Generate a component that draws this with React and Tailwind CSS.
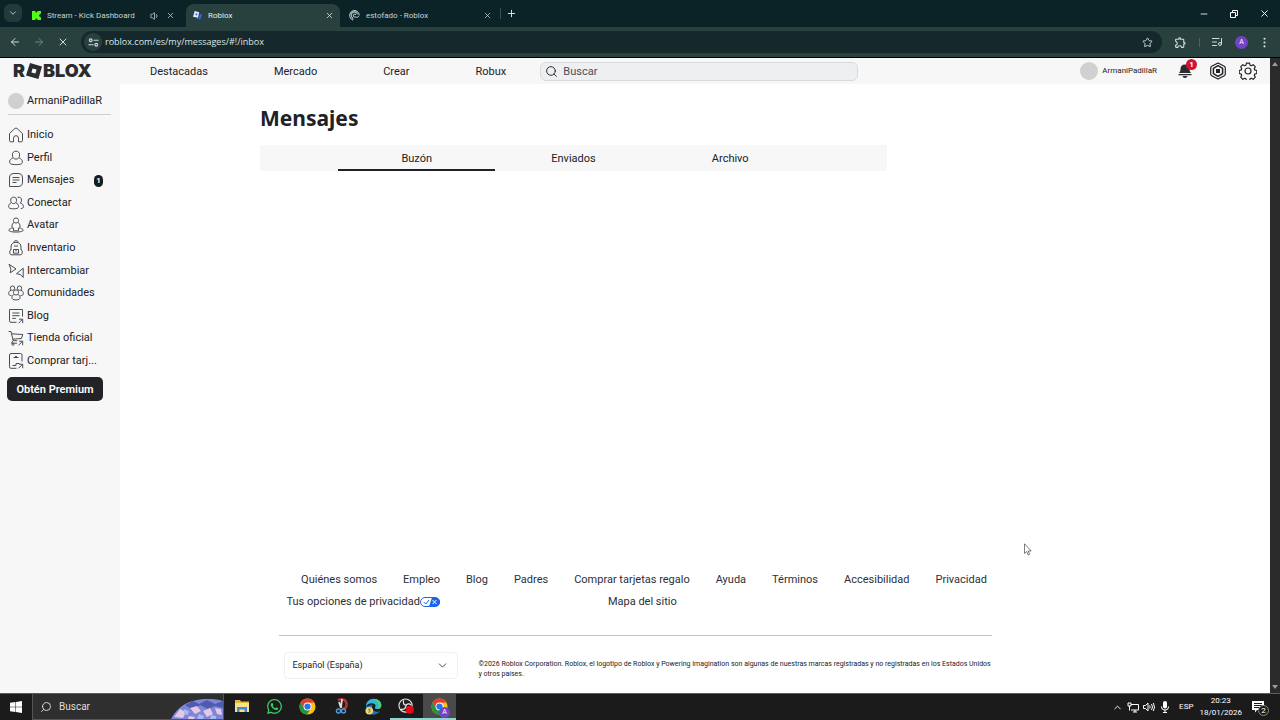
import React from 'react';
import {
    ArrowLeft, ArrowRight, X, ChevronDown, ChevronUp, Plus, Star, Minus,
    EllipsisVertical, Volume1, Search, ListMusic,
} from 'lucide-react';
import { FaWhatsapp } from 'react-icons/fa';
import { MdOutlineExtension } from 'react-icons/md';

const sideItems = [
    { label: 'Inicio', icon: 'home' },
    { label: 'Perfil', icon: 'profile' },
    { label: 'Mensajes', icon: 'messages', badge: 1 },
    { label: 'Conectar', icon: 'friends' },
    { label: 'Avatar', icon: 'avatar' },
    { label: 'Inventario', icon: 'inventory' },
    { label: 'Intercambiar', icon: 'trade' },
    { label: 'Comunidades', icon: 'groups' },
    { label: 'Blog', icon: 'blog' },
    { label: 'Tienda oficial', icon: 'shop' },
    { label: 'Comprar tarj...', icon: 'gift' },
];

const headerLinks = ['Destacadas', 'Mercado', 'Crear', 'Robux'];
const messageTabs = ['Buzón', 'Enviados', 'Archivo'];
const footerLinks = [
    'Quiénes somos', 'Empleo', 'Blog', 'Padres', 'Comprar tarjetas regalo',
    'Ayuda', 'Términos', 'Accesibilidad', 'Privacidad',
];

// Line icons of the side menu, all on a 16x16 grid
const sideIcons = {
    home: <path d="M1.500 6.500 6.800 1.600a1.700 1.700 0 0 1 2.400 0L14.500 6.500v7a1.300 1.300 0 0 1-1.300 1.300h-2.700v-3.600a2.500 2.500 0 0 0-5 0v3.600H2.800a1.300 1.300 0 0 1-1.300-1.300z" />,
    profile: (
        <>
            <path d="M8 1.200c2.400 0 3.600 1.300 3.600 3.700 0 2.600-1.200 4.200-3.600 4.200S4.400 7.500 4.400 4.900C4.400 2.500 5.600 1.200 8 1.200z" />
            <path d="M4.800 8C2.800 8.700 1.600 10.200 1.600 12c0 1.900 1.800 2.600 6.400 2.600s6.400-.7 6.400-2.600c0-1.800-1.200-3.300-3.200-4" />
        </>
    ),
    messages: (
        <>
            <path d="M1.500 14.500V6c0-3 1.500-4.500 4.500-4.500h4c3 0 4.500 1.500 4.500 4.500v4c0 3-1.500 4.500-4.500 4.500z" />
            <path d="M4.500 5.500h7M4.500 8h7M4.500 10.500h4" />
        </>
    ),
    friends: (
        <>
            <path d="M5.600 2.200c2 0 2.900 1 2.900 3s-1 3.400-2.900 3.400-2.900-1.400-2.900-3.400 1-3 2.900-3z" />
            <path d="M3.200 7.900C1.500 8.600.6 9.800.6 11.400c0 1.800 1.400 2.400 5 2.400s5-.6 5-2.400c0-1.600-.9-2.800-2.600-3.500" />
            <path d="M9.500 2.300c2.600-.6 4 .6 4 2.900 0 1.300-.4 2.300-1.200 2.900 2 .5 3.100 1.700 3.100 3.400 0 1.300-.8 2-2.600 2.200" />
        </>
    ),
    avatar: (
        <>
            <path d="M8 1c1.600 0 2.500.9 2.500 2.500S9.600 6 8 6 5.500 5.100 5.500 3.500 6.400 1 8 1z" />
            <path d="M6 5.600C4.500 6.300 4 7.500 4 9v2h1.500v2.800h5V11H12V9c0-1.500-.5-2.700-2-3.400" />
            <path d="M3.500 11.500c-1.700.3-2.800.9-2.800 1.600 0 1.100 3 2 7.300 2s7.300-.9 7.300-2c0-.7-1.100-1.300-2.800-1.600" />
        </>
    ),
    inventory: (
        <>
            <path d="M3 14.800c-1-.6-1.300-1.500-1.300-3 0-1 .4-1.600 1.300-1.800V7c0-3 1.800-4.700 5-4.700S13 4 13 7v3c.9.200 1.300.8 1.300 1.800 0 1.500-.3 2.400-1.300 3z" />
            <path d="M6 2.300C6 1.200 6.600.7 8 .7s2 .5 2 1.600M6 6h4M5.500 9.500h5v3.700h-5zM8 9.500v2" />
        </>
    ),
    trade: <path d="M1 1.300 8 5.900 2.200 9.900 2.900 6.200zM15.200 5.200v9.300L12.600 11.600 8.500 10.700z" />,
    groups: (
        <>
            <circle cx="4.500" cy="3.200" r="2.200" />
            <circle cx="11.500" cy="3.200" r="2.200" />
            <path d="M8 5c1.700 0 2.500.9 2.500 2.400S9.700 10 8 10s-2.500-1.100-2.500-2.600S6.300 5 8 5z" />
            <path d="M6 9.500c-1.400.6-2 1.600-2 2.900 0 1.900 1.200 2.500 4 2.500s4-.6 4-2.500c0-1.300-.6-2.300-2-2.900" />
            <path d="M3 5.300C1.400 6 .6 7 .6 8.500c0 1.300.8 2 2.900 2.100M13 5.300c1.600.7 2.400 1.700 2.400 3.200 0 1.300-.8 2-2.900 2.100" />
        </>
    ),
    blog: (
        <>
            <path d="M8.500 14.300H3a1.500 1.500 0 0 1-1.500-1.500V1.500h13V8.500" />
            <path d="M4.300 5h7.200M4.300 7.700h7.200M4.300 10.400h3.500M10.500 15.300l4-4M11 11.200h3.700v4" />
        </>
    ),
    shop: (
        <>
            <path d="M.6 1.500H3l2.200 9.200h4M3.600 3.800l11.200.7-1.400 4-8.600.7M5 10.700l-1.500 2.500H9" />
            <circle cx="5" cy="14.300" r="1" />
            <path d="M10.500 15.300l4-4M11 11.200h3.700v4" />
        </>
    ),
    gift: (
        <>
            <path d="M8.500 15.300H3a1.500 1.500 0 0 1-1.500-1.500V2A1.500 1.500 0 0 1 3 .5h9.500A1.500 1.500 0 0 1 14 2v6.500" />
            <path d="M5.500 4.500h5M8 3l-1.300 1.500M8 3l1.300 1.500M4.500 12.500h3.500v-2h3.500M10.500 15.300l4-4M11 11.200h3.700v4" />
        </>
    ),
};

const SideIcon = ({ name }) => (
    <svg viewBox="0 0 16 16" className="w-4 h-4 shrink-0" fill="none" stroke="#4b4c50" strokeWidth="1" strokeLinejoin="round" aria-hidden="true">
        {sideIcons[name]}
    </svg>
);

const KickIcon = () => (
    <svg viewBox="0 0 10 10" className="w-[9px] h-[9px] shrink-0" fill="#53fc18" aria-hidden="true">
        <path d="M0 0h4v2h1V1h1V0h4v3H9v1H8v2h1v1h1v3H6V9H5V8H4v2H0z" />
    </svg>
);

const RobloxTile = ({ className }) => (
    <svg viewBox="0 0 16 16" className={className} aria-hidden="true">
        <path fill="currentColor" fillRule="evenodd" d="M4 0 16 3.600 12.400 16 0 12.500zM6.600 5.400 5.400 9.400 9.400 10.600 10.600 6.600z" />
    </svg>
);

const BrowserTab = ({ icon, title, active, sound, className }) => (
    <div className={`flex items-center h-full ${active ? 'bg-[#28413f] rounded-t-lg text-[#e3eeee]' : 'text-[#c5d3d3]'} ${className}`}>
        {icon}
        <span className="ml-[6px] flex-1 truncate">{title}</span>
        {sound && <Volume1 size={10} className="mr-1" />}
        <button aria-label={`Cerrar ${title}`} className="p-[2px]">
            <X size={9} />
        </button>
    </div>
);

const BrowserBar = () => (
    <header className="bg-[#0b2326] text-[#cfdddc] border-b border-black">
        <div className="flex h-[27px] pt-1 text-[8px]">
            <button aria-label="Buscar pestañas" className="w-[18px] h-[18px] ml-1 rounded-md bg-[#213b3b] flex items-center justify-center">
                <ChevronDown size={10} />
            </button>
            <BrowserTab className="w-[154px] ml-[10px] pr-[9px]" icon={<KickIcon />} title="Stream - Kick Dashboard" sound />
            <BrowserTab
                className="w-[154px] pl-[7px] pr-1"
                icon={
                    <svg viewBox="0 0 16 16" className="w-[9px] h-[9px] shrink-0" aria-hidden="true">
                        <path fill="#dfe9ff" d="M3 0 11 2 9 12 0 10z" />
                        <path fill="#3b63d8" d="M5 4l3 .7-.7 3.300-3-.7zM12 5l4 1-3 9-6-1 .5-2 3 .5z" />
                    </svg>
                }
                title="Roblox"
                active
            />
            <BrowserTab
                className="w-[154px] pl-[9px]"
                icon={
                    <svg viewBox="0 0 16 16" className="w-[11px] h-[11px] shrink-0" fill="none" stroke="#b5cccb" strokeWidth="1.500" aria-hidden="true">
                        <path d="M15 8A7 7 0 1 0 4 13.700M12.500 6.500A4.700 4.700 0 1 0 6 12M10 7a2 2 0 1 0-1 3c2 1 4 .5 5-1M6 12l-1 3" />
                    </svg>
                }
                title="estofado - Roblox"
            />
            <span className="w-px h-[11px] mt-1 ml-[6px] bg-[#34504f]" />
            <button aria-label="Nueva pestaña" className="h-[19px] px-[5px] text-[#e3eeee]">
                <Plus size={11} />
            </button>
            <div className="ml-auto flex h-[19px] items-center gap-5 pr-[10px] text-white">
                <button aria-label="Minimizar"><Minus size={10} /></button>
                <button aria-label="Restaurar">
                    <svg viewBox="0 0 10 10" className="w-[10px] h-[10px]" fill="none" stroke="currentColor" aria-hidden="true">
                        <path d="M1.500 3.500h5v5h-5zM3.500 3.500v-2h5v5h-2" />
                    </svg>
                </button>
                <button aria-label="Cerrar"><X size={11} /></button>
            </div>
        </div>
        <div className="flex items-center h-[30px] bg-[#28413f] px-[9px]">
            <button aria-label="Atrás"><ArrowLeft size={12} /></button>
            <button aria-label="Adelante" className="ml-3 text-[#6d8482]"><ArrowRight size={12} /></button>
            <button aria-label="Detener" className="ml-3"><X size={12} /></button>
            <div className="flex-1 flex items-center h-[22px] ml-3 rounded-full bg-[#15292c] pl-[3px] pr-[9px]">
                <span className="w-[18px] h-[18px] rounded-full bg-[#28413f] flex items-center justify-center">
                    <svg viewBox="0 0 12 12" className="w-[11px] h-[11px]" fill="none" stroke="currentColor" strokeWidth="1.200" aria-hidden="true">
                        <circle cx="3" cy="3.500" r="1.500" />
                        <path d="M6 3.500h5.500M.5 8.500H6" />
                        <circle cx="9" cy="8.500" r="1.500" />
                    </svg>
                </span>
                <input
                    aria-label="Dirección"
                    defaultValue="roblox.com/es/my/messages/#!/inbox"
                    className="flex-1 ml-[3px] text-[9px] font-['Open_Sans','Noto_Sans',sans-serif] bg-transparent text-[#dbe6e6] outline-none"
                />
                <button aria-label="Favorito"><Star size={11} /></button>
            </div>
            <button aria-label="Extensiones" className="ml-3"><MdOutlineExtension size={13} /></button>
            <span className="w-px h-[9px] ml-3 bg-[#4a6563]" />
            <button aria-label="Multimedia" className="ml-[11px]"><ListMusic size={12} /></button>
            <button aria-label="Cuenta" className="ml-3 w-[13px] h-[13px] rounded-full bg-[#7443c5] text-white text-[7px] flex items-center justify-center">A</button>
            <button aria-label="Menú" className="ml-[10px]"><EllipsisVertical size={13} /></button>
        </div>
    </header>
);

const SiteHeader = () => (
    <header className="flex items-center h-[26px] bg-[#f7f7f8] px-[13px]">
        <a href="#home" aria-label="Roblox" className="w-[137px] shrink-0 flex items-center gap-px font-['Inter',sans-serif] font-black text-lg leading-none text-[#2b2c30]">
            R<RobloxTile className="w-4 h-4" />BLOX
        </a>
        <nav className="flex gap-[66px] pt-px shrink-0">
            {headerLinks.map((link) => (
                <a key={link} href={`#${link}`}>{link}</a>
            ))}
        </nav>
        <label className="ml-[34px] w-[318px] h-[19px] shrink-0 flex items-center rounded-md border border-[#d9dadd] bg-[#eeeff1] pl-1">
            <Search size={13} strokeWidth={1.75} />
            <input type="search" placeholder="Buscar" aria-label="Buscar" className="ml-[5px] pt-px flex-1 bg-transparent outline-none placeholder:text-[#4b4d55]" />
        </label>
        <div className="ml-auto flex items-center shrink-0">
            <a href="#profile" className="flex items-center gap-1 text-[8px]">
                <span className="w-[18px] h-[18px] rounded-full bg-[#d0d0d1]" />
                ArmaniPadillaR
            </a>
            <button aria-label="Notificaciones" className="relative ml-5">
                <svg viewBox="0 0 16 16" className="w-4 h-4" fill="#2b2c30" aria-hidden="true">
                    <path d="M8 1.500c3 0 4.500 2 4.500 4.500 0 2 .5 2.700 1.500 4H2c1-1.300 1.500-2 1.500-4C3.500 3.500 5 1.500 8 1.500zM1.500 11h13v1.300h-13zM5.500 13h5c-.4 1.300-1.200 2-2.500 2s-2.100-.7-2.500-2z" />
                </svg>
                <span className="absolute -top-1 -right-1 w-[11px] h-[11px] rounded-full bg-[#cf1535] text-white text-[8px] leading-[11px] font-bold">1</span>
            </button>
            <button aria-label="Robux" className="ml-4">
                <svg viewBox="0 0 18 18" className="w-[18px] h-[18px]" fill="none" stroke="#202125" aria-hidden="true">
                    <path strokeWidth="1.200" strokeLinejoin="round" d="M9 1l6.300 3.300c.8.400 1 .9 1 1.700v6c0 .8-.2 1.300-1 1.700L9 17l-6.300-3.300c-.8-.4-1-.9-1-1.700V6c0-.8.2-1.300 1-1.700z" />
                    <path strokeWidth="1.500" strokeLinejoin="round" d="M9 3.700l4.600 2.600v5.400L9 14.300l-4.600-2.600V6.300z" />
                    <path fill="#202125" stroke="none" d="M7 7h4v4H7z" />
                </svg>
            </button>
            <button aria-label="Configuración" className="ml-3">
                <svg viewBox="0 0 18 18" className="w-[18px] h-[18px]" fill="none" stroke="#202125" strokeWidth="1.200" strokeLinejoin="round" aria-hidden="true">
                    <path d="M7.500 1.200h3l.6 2 1.200.5 1.900-1 2.100 2.100-1 1.900.5 1.200 2 .6v3l-2 .6-.5 1.200 1 1.900-2.100 2.100-1.900-1-1.200.5-.6 2h-3l-.6-2-1.200-.5-1.900 1-2.100-2.100 1-1.900-.5-1.200-2-.6v-3l2-.6.5-1.200-1-1.900 2.100-2.100 1.900 1 1.200-.5z" />
                    <circle cx="9" cy="9" r="3" />
                </svg>
            </button>
        </div>
    </header>
);

const SideMenu = () => (
    <aside className="w-[120px] shrink-0 bg-[#f7f7f8] pl-2 pr-[9px] pt-[7px]">
        <a href="#profile" className="flex items-center gap-[3px] h-[19px]">
            <span className="w-4 h-4 rounded-full bg-[#d0d0d1]" />
            ArmaniPadillaR
        </a>
        <ul className="mt-1 pt-[9px] border-t border-[#cfcfd1] flex flex-col h-[258px]">
            {sideItems.map((item) => (
                <li key={item.label} className="flex-1">
                    <a href={`#${item.icon}`} className="h-full flex items-center gap-[3px]">
                        <SideIcon name={item.icon} />
                        <span className="whitespace-nowrap">{item.label}</span>
                        {item.badge && (
                            <span className="shrink-0 ml-auto mr-2 mt-[2px] w-[9px] h-3 rounded-full bg-[#1b1c1f] text-white text-[8px] leading-3 text-center font-bold">
                                {item.badge}
                            </span>
                        )}
                    </a>
                </li>
            ))}
        </ul>
        <button className="mt-[5px] -ml-px w-24 h-6 pt-px rounded-[5px] bg-[#222327] text-white font-semibold">Obtén Premium</button>
    </aside>
);

const Footer = () => (
    <footer className="mt-auto mx-auto w-full max-w-[713px] pb-[14px]">
        <nav className="flex flex-col gap-[6px] text-[#2c2f38]">
            <div className="flex justify-center gap-[26px] pl-[18px]">
                {footerLinks.map((link) => (
                    <a key={link} href={`#${link}`} className="whitespace-nowrap">{link}</a>
                ))}
            </div>
            <div className="flex gap-[168px] pl-2">
                <a href="#privacy" className="flex items-center">
                    Tus opciones de privacidad
                    <svg viewBox="0 0 20 10" className="w-5 h-[10px]" aria-hidden="true">
                        <rect x=".5" y=".5" width="19" height="9" rx="4.500" fill="#fff" stroke="#1b66e8" />
                        <path fill="#1b66e8" d="M12 .5h3.500a4.500 4.500 0 0 1 0 9H9z" />
                        <path fill="none" stroke="#1b66e8" d="M4 5.200l1.800 1.800L9 3" />
                        <path fill="none" stroke="#fff" d="M12.500 3l4 4M16.500 3l-4 4" />
                    </svg>
                </a>
                <a href="#sitemap">Mapa del sitio</a>
            </div>
        </nav>
        <div className="mt-[25px] border-t border-[#c3c3c6] pt-4 pl-[5px] flex">
            <label className="relative w-[174px] shrink-0">
                <select aria-label="Idioma" className="appearance-none w-full h-[27px] pl-2 pb-px text-[9px] bg-white border border-[#f0f0f1] rounded-sm text-[#202125]">
                    <option>Español (España)</option>
                </select>
                <ChevronDown size={13} strokeWidth={1.5} className="absolute right-[9px] top-[7px] pointer-events-none" />
            </label>
            <p className="ml-[21px] mt-[7px] flex-1 text-[7px] leading-[10px]">
                ©2026 Roblox Corporation. Roblox, el logotipo de Roblox y Powering Imagination son algunas de nuestras marcas registradas y no registradas en los Estados Unidos y otros países.
            </p>
        </div>
    </footer>
);

const ChromeLogo = () => (
    <svg viewBox="0 0 18 18" className="w-[17px] h-[17px]" aria-hidden="true">
        <circle cx="9" cy="9" r="8.500" fill="#fbc116" />
        <path fill="#e33b2e" d="M1.640 4.750A8.500 8.500 0 0 1 16.360 4.750L9 5 5.500 11z" />
        <path fill="#229342" d="M1.640 4.750A8.500 8.500 0 0 0 8.500 17.500L12.500 11 5.500 11z" />
        <circle cx="9" cy="9" r="4.200" fill="#fff" />
        <circle cx="9" cy="9" r="3.300" fill="#2b74e8" />
    </svg>
);

const TaskApp = ({ label, active, open, children }) => (
    <button
        aria-label={label}
        className={`relative w-[33px] h-full flex items-center justify-center border-b-2 ${open ? 'border-[#8fd5cf]' : 'border-transparent'} ${active ? 'bg-[#4a4a4a]' : ''}`}
    >
        {children}
    </button>
);

const TaskBar = () => (
    <footer className="flex items-center h-[27px] bg-[#1b1b1c] text-white border-t border-[#5c5c5c]">
        <button aria-label="Inicio" className="w-8 flex justify-center">
            <svg viewBox="0 0 12 12" className="w-3 h-3" fill="#fff" aria-hidden="true">
                <path d="M0 1.700 5.500 1v4.700H0zM6 .9 12 0v5.700H6zM0 6.200h5.500V11L0 10.300zM6 6.200h6V12l-6-.9z" />
            </svg>
        </button>
        <label className="w-[192px] h-full flex items-center bg-[#2f2f30] border border-[#555] border-t-0 pl-[7px]">
            <Search size={12} strokeWidth={1.5} className="-scale-x-100 shrink-0" />
            <input aria-label="Buscar en Windows" placeholder="Buscar" className="ml-[7px] w-20 pt-px text-[10px] bg-transparent outline-none placeholder:text-[#dedede]" />
            <svg viewBox="0 0 52 20" className="ml-auto w-[52px] h-5 self-end shrink-0" aria-hidden="true">
                <path fill="#7f86d6" d="M0 20C6 9 14 3 26 1c10-2 20-1 26 1v18z" />
                <path fill="#4d5bb0" d="M14 6l8-4 6 3 8-4 8 4 8-3v7l-8-2-7 3-8-4-7 5z" />
                <path fill="#e5c7e6" d="M3 18l6-8 6 3-3 6zM19 9l7-2 4 5-6 3zM32 12l7-3 3 6-6 3zM44 9l6 1 1 6-5-1zM18 17l6 1-1 2h-6z" />
                <path fill="#a8b8f0" d="M13 10l5 2-1 4-4-1zM28 15l5 2-1 3h-6zM40 16l5 1v3h-6z" />
            </svg>
        </label>
        <div className="flex h-full ml-[1px]">
            <TaskApp label="Explorador de archivos">
                <svg viewBox="0 0 16 14" className="w-4 h-[14px]" aria-hidden="true">
                    <path fill="#e8b43a" d="M1 1h5l1 1.500h8V12H1z" />
                    <path fill="#fbe08a" d="M1 4h14v9H1z" />
                    <path fill="#3b8ad8" d="M3 8h10v5h-2.500v-2.500h-5V13H3z" />
                </svg>
            </TaskApp>
            <TaskApp label="WhatsApp"><FaWhatsapp size={17} color="#37d366" /></TaskApp>
            <TaskApp label="Chrome"><ChromeLogo /></TaskApp>
            <TaskApp label="Recortes">
                <svg viewBox="0 0 16 16" className="w-4 h-4" fill="none" aria-hidden="true">
                    <path stroke="#b8352b" strokeWidth="2.500" d="M5 2.500c4-2.500 8-.5 8.500 3s-1.500 5-4 5.500" />
                    <path stroke="#d9dde2" strokeWidth="1.800" d="M9 1 8 10M6 4l2 6" />
                    <circle cx="5.500" cy="13" r="2" stroke="#4c9be0" strokeWidth="1.400" />
                    <circle cx="10.500" cy="13" r="2" stroke="#4c9be0" strokeWidth="1.400" />
                </svg>
            </TaskApp>
            <TaskApp label="Edge">
                <svg viewBox="0 0 18 18" className="w-[17px] h-[17px]" aria-hidden="true">
                    <path fill="#1b74c4" d="M1 9a8 8 0 0 0 12 7.500c1.300-.6 2.300-1.400 3-2.500-4 1.500-8.500-.5-8.500-4.500L8 7z" />
                    <path fill="#2fb6d8" d="M1 9c0-5 3.500-8.300 8-8.300 5 0 8.300 3.300 8.300 7 0 3-2 4-4.300 4-1.500 0-2.500-.7-2.500-1.500s.7-1 .7-2.200C11.200 6.500 9.500 5.500 7 5.500 4 5.500 2 7 1 9z" />
                    <path fill="#4fd072" d="M11 1c4 .8 6.300 3.600 6.300 6.700 0 3-2 4-4.300 4 1.500-1 2-3 1-5.500-.7-2-2-3.500-5-4.500z" />
                    <circle cx="4.500" cy="13.500" r="4" fill="#efd979" />
                    <path stroke="#6b6030" fill="none" d="M3.500 11.800h2l-1 1.500c1.500 0 1.300 2-1 1.700" />
                </svg>
            </TaskApp>
            <TaskApp label="OBS" open>
                <svg viewBox="0 0 18 18" className="w-[17px] h-[17px]" aria-hidden="true">
                    <circle cx="8" cy="8" r="7" fill="#222" stroke="#e6e6e6" strokeWidth="1.200" />
                    <path fill="none" stroke="#e6e6e6" strokeWidth="1.300" d="M6 2.500c-1 3 0 4.500 2.500 5M14 7.500c-2-2-4.500-1.500-5.500.5M3 12c3 .5 5-1 5.500-4" />
                    <circle cx="12.500" cy="12.500" r="4.300" fill="#e30b17" />
                </svg>
            </TaskApp>
            <TaskApp label="Chrome, perfil A" active open>
                <ChromeLogo />
                <span className="absolute right-[6px] bottom-0 w-[11px] h-[11px] rounded-full bg-[#7443c5] text-[7px] leading-[11px]">A</span>
            </TaskApp>
        </div>
        <div className="ml-auto flex items-center pr-4">
            <ChevronUp size={11} />
            <svg viewBox="0 0 12 12" className="ml-1 w-3 h-3" fill="none" stroke="#fff" aria-hidden="true">
                <path d="M4 3.500h7.500V9H4M6 11h4M8 9v2M1 2h3v3H1zM2.500 5v4.500" />
            </svg>
            <svg viewBox="0 0 12 12" className="ml-1 w-3 h-3" fill="none" stroke="#fff" aria-hidden="true">
                <path d="M.5 4.500H2.500L5 2v8L2.500 7.500H.5zM6.700 4.500q1 1.500 0 3M8.500 3q2 3 0 6M10.300 2q2.400 4 0 8" />
            </svg>
            <svg viewBox="0 0 10 12" className="ml-[5px] w-[10px] h-3" fill="#fff" aria-hidden="true">
                <rect x="3" y="0" width="4" height="7.500" rx="2" />
                <path d="M1 5.500h1c0 2 1 3 3 3s3-1 3-3h1c0 2.400-1.300 3.700-3.500 4V11H7v1H3v-1h1.500V9.500C2.300 9.200 1 7.900 1 5.500z" />
            </svg>
            <span className="ml-[9px] text-[8px]">ESP</span>
            <div className="ml-[6px] text-[8px] leading-3 text-center">
                <div>20:23</div>
                <div>18/01/2026</div>
            </div>
            <button aria-label="Notificaciones de Windows" className="relative ml-[10px]">
                <svg viewBox="0 0 12 12" className="w-3 h-3" aria-hidden="true">
                    <path fill="#fff" d="M0 0h12v9H5l-2 2.500V9H0z" />
                    <path stroke="#1b1b1c" d="M2 2.500h8M2 4.500h8M2 6.500h5" />
                </svg>
                <span className="absolute top-1 left-[6px] w-[11px] h-[11px] rounded-full bg-[#1b1b1c] border border-[#8b8b8b] text-[8px] leading-[9px]">2</span>
            </button>
        </div>
    </footer>
);

const App = () => {
    return (
        <div className="min-h-screen flex flex-col bg-white text-[#202125] text-[11px] leading-4 font-['Roboto','Noto_Sans',sans-serif]">
            <BrowserBar />
            <div className="flex-1 flex">
                <div className="flex-1 flex flex-col">
                    <SiteHeader />
                    <div className="flex-1 flex">
                        <SideMenu />
                        <main className="flex-1 flex flex-col pr-[120px]">
                            <div className="mx-auto w-full max-w-[750px] pt-5">
                                <h1 className="text-[21px] leading-7 font-bold font-['Noto_Sans',sans-serif]">Mensajes</h1>
                                <div role="tablist" className="mt-[13px] w-[627px] h-[26px] flex justify-center bg-[#f7f7f8]">
                                    {messageTabs.map((tab, i) => (
                                        <button
                                            key={tab}
                                            role="tab"
                                            aria-selected={i === 0}
                                            className={`w-1/4 pt-[3px] border-b-2 ${i === 0 ? 'border-[#202125]' : 'border-transparent'}`}
                                        >
                                            {tab}
                                        </button>
                                    ))}
                                </div>
                            </div>
                            <Footer />
                        </main>
                    </div>
                </div>
                <div className="w-[10px] bg-[#2b2b2c] flex flex-col justify-between items-center py-1">
                    <svg viewBox="0 0 6 4" className="w-[6px] h-1" fill="#9b9b9b" aria-hidden="true"><path d="M0 4l3-4 3 4z" /></svg>
                    <svg viewBox="0 0 6 4" className="w-[6px] h-1" fill="#9b9b9b" aria-hidden="true"><path d="M0 0l3 4 3-4z" /></svg>
                </div>
            </div>
            <TaskBar />

            {/* Mouse pointer */}
            <svg viewBox="0 0 8 13" className="absolute left-[1024px] top-[543px] w-2 h-[13px]" fill="#fff" stroke="#444" strokeWidth=".7" aria-hidden="true">
                <path d="M.5.8v9.700l2.200-2 1.500 3.500 1.500-.7-1.500-3.300h3z" />
            </svg>
        </div>
    );
};

export default App;
